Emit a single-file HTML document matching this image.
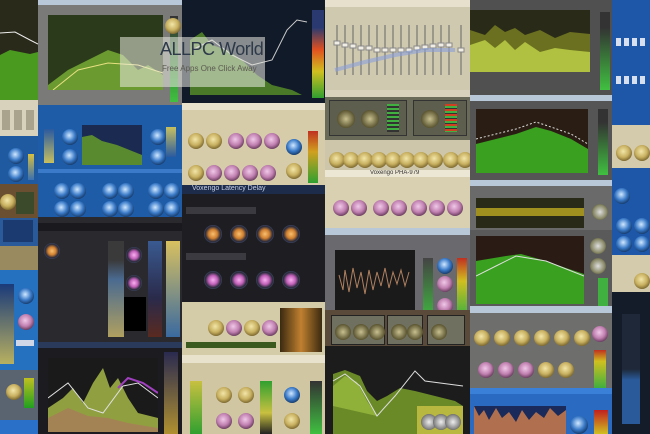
<!DOCTYPE html>
<html><head><meta charset="utf-8"><style>
*{margin:0;padding:0;box-sizing:border-box}
body{width:650px;height:434px;overflow:hidden;background:#222;position:relative;font-family:"Liberation Sans",sans-serif}
.p{position:absolute;overflow:hidden}
.k{position:absolute;width:16px;height:16px;border-radius:50%;background:radial-gradient(circle at 45% 40%,#f2e6a8 0,#c8b060 45%,#6d5a25 80%,#222 100%)}
.kp{background:radial-gradient(circle at 45% 40%,#f0c8e8 0,#c080b0 45%,#5a3050 80%,#222 100%)}
.kb{background:radial-gradient(circle at 45% 40%,#d0e8ff 0,#3a7ac8 45%,#10305a 80%,#061830 100%)}
.ko{background:radial-gradient(circle at 50% 50%,#f8c070 0,#d08030 35%,#2a2a3a 60%,#4a5a80 80%,#111 100%)}
.km{background:radial-gradient(circle at 50% 50%,#f8b0f0 0,#c060b8 35%,#2a2a3a 60%,#4a5a80 80%,#111 100%)}
.t{position:absolute;font-size:6px;color:#ddd;white-space:nowrap}
svg{position:absolute}
</style></head><body>

<!-- Column 1 -->
<div class="p" style="left:0;top:0;width:38px;height:100px;background:#2a2a1a">
<svg width="38" height="100"><polygon points="0,55 10,50 20,52 30,54 38,52 38,100 0,100" fill="#4a9a20"/><polyline points="0,33 15,32 30,40 38,44" stroke="#eee" fill="none"/></svg></div>
<div class="p" style="left:0;top:100px;width:38px;height:36px;background:#d8d2bc"><div style="position:absolute;left:2px;top:10px;width:34px;height:20px;background:repeating-linear-gradient(90deg,#8a8470 0 8px,transparent 8px 12px);opacity:.6"></div></div>
<div class="p" style="left:0;top:136px;width:38px;height:48px;background:#1f5aa0"><div class="k kb" style="left:8px;top:12px"></div><div class="k kb" style="left:8px;top:30px"></div><div style="position:absolute;left:28px;top:18px;width:6px;height:26px;background:linear-gradient(#d8c040,#3a70b0)"></div></div>
<div class="p" style="left:0;top:184px;width:38px;height:34px;background:#6a5030"><div class="k" style="left:0;top:10px"></div><div style="position:absolute;left:16px;top:8px;width:18px;height:22px;background:#3a4a2a"></div></div>
<div class="p" style="left:0;top:218px;width:38px;height:52px;background:#2a5a9a"><div style="position:absolute;left:3px;top:2px;width:30px;height:22px;background:#1a3a70"></div><div style="position:absolute;left:0;top:28px;width:38px;height:24px;background:#9a8a60"></div></div>
<div class="p" style="left:0;top:270px;width:38px;height:100px;background:#2670c0"><div style="position:absolute;left:0;top:14px;width:14px;height:80px;background:linear-gradient(#1a3a7a,#b8b060)"></div><div class="k kb" style="left:18px;top:18px"></div><div class="k kp" style="left:18px;top:44px"></div><div style="position:absolute;left:16px;top:70px;width:18px;height:6px;background:#d0d8e8"></div></div>
<div class="p" style="left:0;top:370px;width:38px;height:64px;background:#5a6470"><div class="k" style="left:6px;top:14px"></div><div style="position:absolute;left:24px;top:8px;width:10px;height:30px;background:linear-gradient(#c0c020,#20a020)"></div><div style="position:absolute;left:0;top:50px;width:38px;height:14px;background:#2a70c8"></div></div>

<!-- Column 2 -->
<div class="p" style="left:38px;top:0;width:144px;height:105px;background:#7a7a78">
<div style="position:absolute;left:0;top:0;width:144px;height:5px;background:#b8c8d8"></div>
<div style="position:absolute;left:10px;top:15px;width:115px;height:75px;background:#2a3a1a">
<svg width="115" height="75"><polygon points="0,70 20,55 40,45 60,35 75,40 90,55 100,50 115,60 115,75 0,75" fill="#6a9a30"/><polyline points="5,75 30,55 60,48 90,50 115,58" stroke="#e8e080" fill="none"/></svg></div>
<div style="position:absolute;left:132px;top:16px;width:8px;height:86px;background:linear-gradient(#333,#40c040)"></div>
<div class="k" style="left:127px;top:18px"></div>
</div>
<div class="p" style="left:38px;top:105px;width:144px;height:112px;background:#1e5ca8">
<div style="position:absolute;left:44px;top:20px;width:60px;height:40px;background:#1a2a50"><svg width="60" height="40"><polygon points="0,40 0,12 10,10 20,16 35,20 50,26 60,30 60,40" fill="#5a8a30"/></svg></div>
<div style="position:absolute;left:6px;top:24px;width:10px;height:34px;background:linear-gradient(#2a5aa0,#c8c060)"></div>
<div style="position:absolute;left:128px;top:22px;width:10px;height:30px;background:linear-gradient(#c8c060,#2a5aa0)"></div>
<div class="k kb" style="left:24px;top:24px"></div><div class="k kb" style="left:24px;top:44px"></div><div class="k kb" style="left:112px;top:24px"></div><div class="k kb" style="left:112px;top:44px"></div>
<div class="k kb" style="left:16px;top:78px"></div><div class="k kb" style="left:32px;top:78px"></div><div class="k kb" style="left:64px;top:78px"></div><div class="k kb" style="left:80px;top:78px"></div><div class="k kb" style="left:110px;top:78px"></div><div class="k kb" style="left:126px;top:78px"></div>
<div class="k kb" style="left:16px;top:96px"></div><div class="k kb" style="left:32px;top:96px"></div><div class="k kb" style="left:64px;top:96px"></div><div class="k kb" style="left:80px;top:96px"></div><div class="k kb" style="left:110px;top:96px"></div><div class="k kb" style="left:126px;top:96px"></div>
<div style="position:absolute;left:0;top:64px;width:144px;height:4px;background:#3a7ac8"></div>
</div>
<div class="p" style="left:38px;top:217px;width:144px;height:125px;background:#2a2a2e">
<div style="position:absolute;left:0;top:6px;width:144px;height:8px;background:#1a1a1e"></div>
<div style="position:absolute;left:70px;top:24px;width:16px;height:96px;background:linear-gradient(#3a3a3a 20%,#4a6a90 40%,#b0a060)"></div>
<div style="position:absolute;left:110px;top:24px;width:14px;height:96px;background:linear-gradient(#3a5a90,#2a2a4a 60%,#5a2a20)"></div>
<div style="position:absolute;left:128px;top:24px;width:14px;height:96px;background:linear-gradient(#d8c060,#3a6aa0)"></div>
<div class="k ko" style="left:6px;top:26px"></div><div class="k km" style="left:88px;top:30px"></div><div class="k km" style="left:88px;top:58px"></div>
<div style="position:absolute;left:86px;top:80px;width:22px;height:34px;background:#000"></div>
</div>
<div class="p" style="left:38px;top:342px;width:144px;height:92px;background:#1c1c20">
<div style="position:absolute;left:0;top:0;width:144px;height:6px;background:#2a3a5a"></div>
<div style="position:absolute;left:10px;top:16px;width:110px;height:74px;background:#1a1a1a"><svg width="110" height="74"><polygon points="0,74 0,50 15,40 25,30 35,45 45,25 55,10 62,30 70,20 80,40 90,55 110,60 110,74" fill="#90a040"/><polygon points="0,74 0,60 20,50 40,58 60,60 80,65 110,70 110,74" fill="#b07060" opacity=".6"/><polyline points="0,40 20,25 40,50 55,55 75,28 90,25 110,40" stroke="#e0e0e0" fill="none"/><polyline points="70,30 80,20 95,25 110,35" stroke="#a040c0" stroke-width="2" fill="none"/></svg></div>
<div style="position:absolute;left:126px;top:10px;width:14px;height:82px;background:linear-gradient(#2a2a50,#b09030)"></div>
</div>

<!-- Column 3 -->
<div class="p" style="left:182px;top:0;width:143px;height:103px;background:#101a28">
<svg width="143" height="103"><polygon points="8,95 8,40 20,32 30,45 45,50 60,60 75,75 90,85 110,90 120,95" fill="#4a7a28"/><polyline points="10,50 30,40 50,55 70,65 90,60 105,30 115,20 125,22" stroke="#ccc" fill="none"/></svg>
<div style="position:absolute;left:130px;top:10px;width:12px;height:88px;background:linear-gradient(#2a3a70 20%,#e05020 45%,#d0c020 70%,#30a030)"></div>
</div>
<div class="p" style="left:182px;top:103px;width:143px;height:82px;background:#d6ccaa">
<div style="position:absolute;left:0;top:0;width:143px;height:7px;background:#e8e2cc"></div>
<div class="k" style="left:6px;top:30px"></div><div class="k" style="left:24px;top:30px"></div><div class="k kp" style="left:46px;top:30px"></div><div class="k kp" style="left:64px;top:30px"></div><div class="k kp" style="left:82px;top:30px"></div><div class="k kb" style="left:104px;top:36px"></div>
<div class="k" style="left:6px;top:62px"></div><div class="k kp" style="left:24px;top:62px"></div><div class="k kp" style="left:42px;top:62px"></div><div class="k kp" style="left:60px;top:62px"></div><div class="k kp" style="left:78px;top:62px"></div><div class="k" style="left:104px;top:60px"></div>
<div style="position:absolute;left:126px;top:28px;width:10px;height:52px;background:linear-gradient(#c03020,#d0a020 40%,#30a030)"></div>
</div>
<div class="p" style="left:182px;top:185px;width:143px;height:117px;background:#1e1e22">
<div style="position:absolute;left:0;top:0;width:143px;height:9px;background:#1c2c4a"></div>
<div class="t" style="left:10px;top:0;color:#c8d0e8;font-size:7px">Voxengo Latency Delay</div>
<div style="position:absolute;left:4px;top:22px;width:70px;height:7px;background:#3a3a40"></div>
<div class="k ko" style="left:22px;top:40px;width:18px;height:18px"></div><div class="k ko" style="left:48px;top:40px;width:18px;height:18px"></div><div class="k ko" style="left:74px;top:40px;width:18px;height:18px"></div><div class="k ko" style="left:100px;top:40px;width:18px;height:18px"></div>
<div style="position:absolute;left:4px;top:68px;width:60px;height:7px;background:#3a3a40"></div>
<div class="k km" style="left:22px;top:86px;width:18px;height:18px"></div><div class="k km" style="left:48px;top:86px;width:18px;height:18px"></div><div class="k km" style="left:74px;top:86px;width:18px;height:18px"></div><div class="k km" style="left:100px;top:86px;width:18px;height:18px"></div>
</div>
<div class="p" style="left:182px;top:302px;width:143px;height:53px;background:#d4cba8">
<div class="k" style="left:26px;top:18px"></div><div class="k kp" style="left:44px;top:18px"></div><div class="k" style="left:62px;top:18px"></div><div class="k kp" style="left:80px;top:18px"></div>
<div style="position:absolute;left:98px;top:6px;width:42px;height:44px;background:linear-gradient(90deg,#3a2a10,#c08030 50%,#3a2a10)"></div>
<div style="position:absolute;left:4px;top:40px;width:90px;height:6px;background:#3a5a20"></div>
</div>
<div class="p" style="left:182px;top:355px;width:143px;height:79px;background:#d0c6a2">
<div style="position:absolute;left:0;top:0;width:143px;height:8px;background:#e8e2cc"></div>
<div style="position:absolute;left:8px;top:26px;width:12px;height:53px;background:linear-gradient(#c8c040,#30a030)"></div>
<div style="position:absolute;left:78px;top:26px;width:12px;height:53px;background:linear-gradient(#30a030,#c8c040 60%,#222)"></div>
<div style="position:absolute;left:128px;top:26px;width:12px;height:53px;background:linear-gradient(#333,#40c040)"></div>
<div class="k" style="left:34px;top:32px"></div><div class="k" style="left:56px;top:32px"></div><div class="k kb" style="left:102px;top:32px"></div>
<div class="k kp" style="left:34px;top:58px"></div><div class="k kp" style="left:56px;top:58px"></div><div class="k" style="left:102px;top:58px"></div>
</div>

<!-- Column 4 -->
<div class="p" style="left:325px;top:0;width:145px;height:90px;background:#cfc9b0">
<div style="position:absolute;left:0;top:0;width:145px;height:7px;background:#e6e0cc"></div>
<svg width="145" height="90"><g stroke="#666" stroke-width="1"><line x1="12" y1="25" x2="12" y2="75"/><line x1="20" y1="25" x2="20" y2="75"/><line x1="28" y1="25" x2="28" y2="75"/><line x1="36" y1="25" x2="36" y2="75"/><line x1="44" y1="25" x2="44" y2="75"/><line x1="52" y1="25" x2="52" y2="75"/><line x1="60" y1="25" x2="60" y2="75"/><line x1="68" y1="25" x2="68" y2="75"/><line x1="76" y1="25" x2="76" y2="75"/><line x1="84" y1="25" x2="84" y2="75"/><line x1="92" y1="25" x2="92" y2="75"/><line x1="100" y1="25" x2="100" y2="75"/><line x1="108" y1="25" x2="108" y2="75"/><line x1="116" y1="25" x2="116" y2="75"/><line x1="124" y1="25" x2="124" y2="75"/><line x1="136" y1="25" x2="136" y2="75"/></g>
<g fill="#f0eee4" stroke="#888"><rect x="9" y="41" width="6" height="4"/><rect x="17" y="43" width="6" height="4"/><rect x="25" y="44" width="6" height="4"/><rect x="33" y="46" width="6" height="4"/><rect x="41" y="46" width="6" height="4"/><rect x="49" y="48" width="6" height="4"/><rect x="57" y="48" width="6" height="4"/><rect x="65" y="48" width="6" height="4"/><rect x="73" y="48" width="6" height="4"/><rect x="81" y="48" width="6" height="4"/><rect x="89" y="46" width="6" height="4"/><rect x="97" y="45" width="6" height="4"/><rect x="105" y="44" width="6" height="4"/><rect x="113" y="43" width="6" height="4"/><rect x="121" y="43" width="6" height="4"/><rect x="133" y="48" width="6" height="4"/></g>
<polyline points="10,70 40,62 70,55 100,50 130,50" stroke="#8aa0d8" stroke-width="4" fill="none" opacity=".6"/></svg>
</div>
<div class="p" style="left:325px;top:90px;width:145px;height:50px;background:#6a6a58">
<div style="position:absolute;left:0;top:0;width:145px;height:7px;background:#d8d2bc"></div>
<div style="position:absolute;left:4px;top:10px;width:78px;height:36px;border:1px solid #333;background:#5e5e4e"></div>
<div style="position:absolute;left:88px;top:10px;width:54px;height:36px;border:1px solid #333;background:#5e5e4e"></div>
<div class="k" style="left:12px;top:20px;width:18px;height:18px;background:radial-gradient(#c8c090,#5a5430 70%,#222)"></div><div class="k" style="left:36px;top:20px;width:18px;height:18px;background:radial-gradient(#c8c090,#5a5430 70%,#222)"></div><div class="k" style="left:96px;top:20px;width:18px;height:18px;background:radial-gradient(#c8c090,#5a5430 70%,#222)"></div>
<div style="position:absolute;left:62px;top:14px;width:12px;height:28px;background:repeating-linear-gradient(#40b040 0 2px,#333 2px 4px)"></div>
<div style="position:absolute;left:120px;top:14px;width:12px;height:28px;background:repeating-linear-gradient(#d04020 0 2px,#40b040 2px 4px,#333 4px 5px)"></div>
</div>
<div class="p" style="left:325px;top:140px;width:145px;height:30px;background:#cdc6aa">
<div class="k" style="left:4px;top:12px"></div><div class="k" style="left:18px;top:12px"></div><div class="k" style="left:32px;top:12px"></div><div class="k" style="left:46px;top:12px"></div><div class="k" style="left:60px;top:12px"></div><div class="k" style="left:74px;top:12px"></div><div class="k" style="left:88px;top:12px"></div><div class="k" style="left:102px;top:12px"></div><div class="k" style="left:118px;top:12px"></div><div class="k" style="left:132px;top:12px"></div>
</div>
<div class="p" style="left:325px;top:170px;width:145px;height:58px;background:#d8d0b0">
<div style="position:absolute;left:0;top:0;width:145px;height:7px;background:#ece6d4"></div>
<div class="t" style="left:45px;top:0;color:#333;font-size:6px">Voxengo PHA-979</div>
<div class="k kp" style="left:8px;top:30px"></div><div class="k kp" style="left:26px;top:30px"></div><div class="k kp" style="left:48px;top:30px"></div><div class="k kp" style="left:66px;top:30px"></div><div class="k kp" style="left:86px;top:30px"></div><div class="k kp" style="left:104px;top:30px"></div><div class="k kp" style="left:122px;top:30px"></div>
</div>
<div class="p" style="left:325px;top:228px;width:145px;height:82px;background:#6a6a6e">
<div style="position:absolute;left:0;top:0;width:145px;height:7px;background:#b8c8d8"></div>
<div style="position:absolute;left:10px;top:22px;width:80px;height:60px;background:#1a1a1a"><svg width="80" height="60"><polyline points="4,25 8,40 10,20 14,42 18,18 22,38 26,22 30,44 34,20 38,40 42,22 46,36 50,18 54,38 58,22 62,34 66,20 70,36 74,22" stroke="#b08060" fill="none"/></svg></div>
<div style="position:absolute;left:98px;top:30px;width:10px;height:58px;background:linear-gradient(#444,#40b040)"></div>
<div style="position:absolute;left:132px;top:30px;width:10px;height:58px;background:linear-gradient(#c03020,#d0c020 40%,#40b040)"></div>
<div class="k kb" style="left:112px;top:30px"></div><div class="k kp" style="left:112px;top:48px"></div><div class="k kp" style="left:112px;top:70px"></div>
</div>
<div class="p" style="left:325px;top:310px;width:145px;height:36px;background:#5a4a3a">
<div style="position:absolute;left:6px;top:5px;width:54px;height:30px;background:#707060;border:1px solid #222"></div><div style="position:absolute;left:62px;top:5px;width:36px;height:30px;background:#707060;border:1px solid #222"></div><div style="position:absolute;left:102px;top:5px;width:38px;height:30px;background:#707060;border:1px solid #222"></div>
<div class="k" style="left:10px;top:14px;background:radial-gradient(#c8c090,#5a5430 70%,#222)"></div><div class="k" style="left:28px;top:14px;background:radial-gradient(#c8c090,#5a5430 70%,#222)"></div><div class="k" style="left:44px;top:14px;background:radial-gradient(#c8c090,#5a5430 70%,#222)"></div><div class="k" style="left:66px;top:14px;background:radial-gradient(#c8c090,#5a5430 70%,#222)"></div><div class="k" style="left:82px;top:14px;background:radial-gradient(#c8c090,#5a5430 70%,#222)"></div><div class="k" style="left:106px;top:14px;background:radial-gradient(#c8c090,#5a5430 70%,#222)"></div>
</div>
<div class="p" style="left:325px;top:346px;width:145px;height:88px;background:#1c1c1c">
<svg width="145" height="88"><polygon points="8,88 8,28 20,24 35,30 42,45 52,55 62,50 75,42 90,45 110,50 130,55 138,60 138,88" fill="#6a8a28"/><polygon points="8,40 20,30 32,36 42,55 52,70 8,60" fill="#a0c040" opacity=".7"/><polyline points="8,35 20,28 35,40 52,70 70,50 90,25 100,35 138,40" stroke="#ddd" fill="none"/></svg>
<div style="position:absolute;left:92px;top:60px;width:46px;height:28px;background:#b8b840"><div class="k" style="left:4px;top:8px;background:radial-gradient(#eee,#888 60%,#222)"></div><div class="k" style="left:16px;top:8px;background:radial-gradient(#eee,#888 60%,#222)"></div><div class="k" style="left:28px;top:8px;background:radial-gradient(#eee,#888 60%,#222)"></div></div>
</div>

<!-- Column 5 -->
<div class="p" style="left:470px;top:0;width:142px;height:95px;background:#505050">
<div style="position:absolute;left:0;top:10px;width:120px;height:62px;background:#2a2a18"><svg width="120" height="62"><polygon points="0,62 0,20 15,25 25,15 35,22 45,18 55,25 70,20 85,28 100,22 120,24 120,62" fill="#6a7020"/><polygon points="0,62 0,35 15,30 25,38 35,30 45,40 55,32 70,42 85,38 100,40 120,42 120,62" fill="#b0c040"/></svg></div>
<div style="position:absolute;left:130px;top:12px;width:10px;height:78px;background:linear-gradient(#333 20%,#40c040)"></div>
</div>
<div class="p" style="left:470px;top:95px;width:142px;height:85px;background:#555">
<div style="position:absolute;left:0;top:0;width:142px;height:6px;background:#b8c8d8"></div>
<div style="position:absolute;left:6px;top:14px;width:112px;height:64px;background:#2a1e14"><svg width="112" height="64"><polygon points="0,64 0,35 20,30 40,25 60,18 75,22 95,30 112,40 112,64" fill="#3aa020"/><polyline points="0,30 20,25 40,20 60,13 75,18 95,25 112,35" stroke="#ddd" stroke-dasharray="2 2" fill="none"/></svg></div>
<div style="position:absolute;left:128px;top:14px;width:10px;height:66px;background:linear-gradient(#333 20%,#40c040)"></div>
</div>
<div class="p" style="left:470px;top:180px;width:142px;height:50px;background:#6a6a6a">
<div style="position:absolute;left:0;top:0;width:142px;height:6px;background:#b8c8d8"></div>
<div style="position:absolute;left:6px;top:18px;width:108px;height:30px;background:#2a2a18"><div style="position:absolute;left:0;top:10px;width:108px;height:8px;background:#a09020"></div></div>
<div class="k" style="left:122px;top:24px;background:radial-gradient(#ddd,#886 60%,#222)"></div>
</div>
<div class="p" style="left:470px;top:230px;width:142px;height:76px;background:#5a5a5a">
<div style="position:absolute;left:6px;top:6px;width:108px;height:68px;background:#2a1c14"><svg width="108" height="68"><polygon points="0,68 0,25 30,20 45,18 70,25 90,32 108,38 108,68" fill="#3aa020"/><polyline points="0,40 20,30 40,20 70,25 108,40" stroke="#ddd" fill="none"/></svg></div>
<div class="k" style="left:120px;top:8px;background:radial-gradient(#ddd,#886 60%,#222)"></div><div class="k" style="left:120px;top:28px;background:radial-gradient(#ddd,#886 60%,#222)"></div>
<div style="position:absolute;left:128px;top:48px;width:10px;height:28px;background:#40b040"></div>
</div>
<div class="p" style="left:470px;top:306px;width:142px;height:82px;background:#6e6e6c">
<div style="position:absolute;left:0;top:0;width:142px;height:7px;background:#b8c8d8"></div>
<div class="k" style="left:4px;top:24px"></div><div class="k" style="left:24px;top:24px"></div><div class="k" style="left:44px;top:24px"></div><div class="k" style="left:64px;top:24px"></div><div class="k" style="left:84px;top:24px"></div><div class="k" style="left:104px;top:24px"></div><div class="k kp" style="left:122px;top:20px"></div>
<div class="k kp" style="left:8px;top:56px"></div><div class="k kp" style="left:28px;top:56px"></div><div class="k kp" style="left:48px;top:56px"></div><div class="k" style="left:68px;top:56px"></div><div class="k" style="left:88px;top:56px"></div>
<div style="position:absolute;left:124px;top:44px;width:12px;height:38px;background:linear-gradient(#c03020,#d0c020 30%,#40b040)"></div>
</div>
<div class="p" style="left:470px;top:388px;width:142px;height:46px;background:#2a6ac0">
<div style="position:absolute;left:0;top:0;width:142px;height:6px;background:#3a80d8"></div>
<div style="position:absolute;left:4px;top:18px;width:92px;height:28px;background:#b07050"><svg width="92" height="28"><polygon points="0,0 5,10 10,4 15,14 22,2 28,12 35,6 42,16 48,4 55,14 62,6 70,12 76,2 84,10 92,4 92,0" fill="#1a2a5a"/></svg></div>
<div class="k kb" style="left:100px;top:28px;width:18px;height:18px"></div>
<div style="position:absolute;left:124px;top:22px;width:14px;height:24px;background:linear-gradient(#c02020,#d0c020)"></div>
</div>

<!-- Column 6 -->
<div class="p" style="left:612px;top:0;width:38px;height:125px;background:#1e56a8">
<div style="position:absolute;left:4px;top:38px;width:30px;height:8px;background:repeating-linear-gradient(90deg,#d8e0f0 0 5px,transparent 5px 8px)"></div>
<div style="position:absolute;left:4px;top:76px;width:30px;height:8px;background:repeating-linear-gradient(90deg,#d8e0f0 0 5px,transparent 5px 8px)"></div>
</div>
<div class="p" style="left:612px;top:125px;width:38px;height:43px;background:#d4cbac"><div class="k" style="left:4px;top:20px"></div><div class="k" style="left:22px;top:20px"></div></div>
<div class="p" style="left:612px;top:168px;width:38px;height:87px;background:#1e56a8"><div class="k kb" style="left:2px;top:20px"></div><div class="k kb" style="left:4px;top:50px"></div><div class="k kb" style="left:22px;top:50px"></div><div class="k kb" style="left:4px;top:68px"></div><div class="k kb" style="left:22px;top:68px"></div></div>
<div class="p" style="left:612px;top:255px;width:38px;height:37px;background:#d4cbac"><div class="k" style="left:22px;top:18px"></div></div>
<div class="p" style="left:612px;top:292px;width:38px;height:142px;background:#141c2a"><div style="position:absolute;left:10px;top:22px;width:18px;height:110px;background:linear-gradient(#1e2838 50%,#2a5a9a 60%)"></div></div>

<!-- Watermark -->
<div class="p" style="left:120px;top:37px;width:145px;height:50px;background:rgba(235,235,225,.55)">
<div style="position:absolute;left:40px;top:2px;font-size:18px;color:#2e3a4a;letter-spacing:-.5px">ALLPC World</div>
<div style="position:absolute;left:42px;top:27px;font-size:8px;color:#5a5a50">Free Apps One Click Away</div>
</div>
</body></html>
